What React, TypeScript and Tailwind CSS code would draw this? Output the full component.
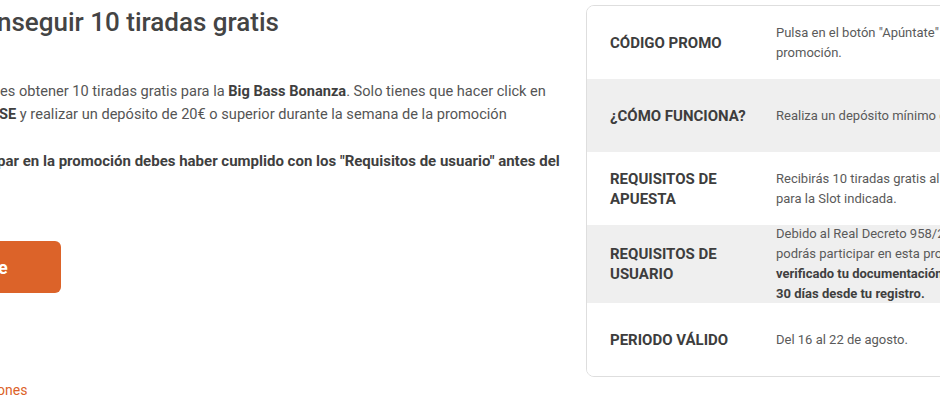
import React from "react";

const rows = [
  {
    label: ["CÓDIGO PROMO"],
    value: [<>Pulsa en el botón "Apúntate" para participar en la</>, <>promoción.</>],
    gray: false,
    h: "h-[73px]",
  },
  {
    label: ["¿CÓMO FUNCIONA?"],
    value: [<>Realiza un depósito mínimo de 20€ durante la semana.</>],
    gray: true,
    h: "h-[73px]",
  },
  {
    label: ["REQUISITOS DE", "APUESTA"],
    value: [<>Recibirás 10 tiradas gratis al día siguiente</>, <>para la Slot indicada.</>],
    gray: false,
    h: "h-[73px]",
  },
  {
    label: ["REQUISITOS DE", "USUARIO"],
    value: [
      <>Debido al Real Decreto 958/2020 solo</>,
      <>podrás participar en esta promoción si has</>,
      <b className="font-bold text-[#3f3f3f]">verificado tu documentación antes de los</b>,
      <b className="font-bold text-[#3f3f3f]">30 días desde tu registro.</b>,
    ],
    gray: true,
    h: "h-[78px]",
  },
  {
    label: ["PERIODO VÁLIDO"],
    value: [<>Del 16 al 22 de agosto.</>],
    gray: false,
    h: "h-[73px]",
  },
];

export default function App() {
  return (
    <div
      className="w-[940px] h-[400px] overflow-hidden bg-white flex"
      style={{ fontFamily: "Roboto, 'Open Sans', sans-serif" }}
    >
      <div className="w-[586px] shrink-0 flex flex-col text-[#4a4a4a]">
        <h1 className="mt-[6px] -ml-[3px] text-[26px] leading-[32px] font-medium text-[#444] whitespace-nowrap">
          nseguir 10 tiradas gratis
        </h1>
        <div className="mt-[42px] text-[14.6px] leading-[23px] text-[#555] whitespace-nowrap">
          <div>
            es obtener 10 tiradas gratis para la <b className="font-bold text-[#3f3f3f]">Big Bass Bonanza</b>. Solo tienes que hacer click en
          </div>
          <div className="-ml-[1px]">
            <b className="font-bold text-[#3f3f3f]">SE</b> y realizar un depósito de 20€ o superior durante la semana de la promoción
          </div>
        </div>
        <div className="mt-[24px] -ml-[3px] text-[15px] leading-[23px] font-bold text-[#3f3f3f] whitespace-nowrap">
          par en la promoción debes haber cumplido con los "Requisitos de usuario" antes del
        </div>
        <div className="mt-[68px] -ml-[40px] w-[101px] h-[56px] rounded-[6px] bg-[#dc6329] flex items-center pl-[38px] text-white font-bold text-[18px]">
          e
        </div>
        <div className="mt-[87px] -ml-[3px] text-[14px] leading-[20px] text-[#dc6329] whitespace-nowrap">
          ones
        </div>
      </div>
      <div className="shrink-0 w-[420px] mt-[5px] self-start rounded-[8px] border border-[#dedede] overflow-hidden">
        {rows.map((r, i) => (
          <div
            key={i}
            className={`flex items-center ${r.h} ${r.gray ? "bg-[#efefef]" : "bg-white"}`}
          >
            <div className="w-[189px] shrink-0 pl-[23px] text-[15px] leading-[20px] font-bold text-[#3d3d3d]">
              {r.label.map((l, j) => (
                <div key={j}>{l}</div>
              ))}
            </div>
            <div className="text-[13px] leading-[20px] text-[#5a5a5a] whitespace-nowrap">
              {r.value.map((v, j) => (
                <div key={j}>{v}</div>
              ))}
            </div>
          </div>
        ))}
      </div>
    </div>
  );
}
